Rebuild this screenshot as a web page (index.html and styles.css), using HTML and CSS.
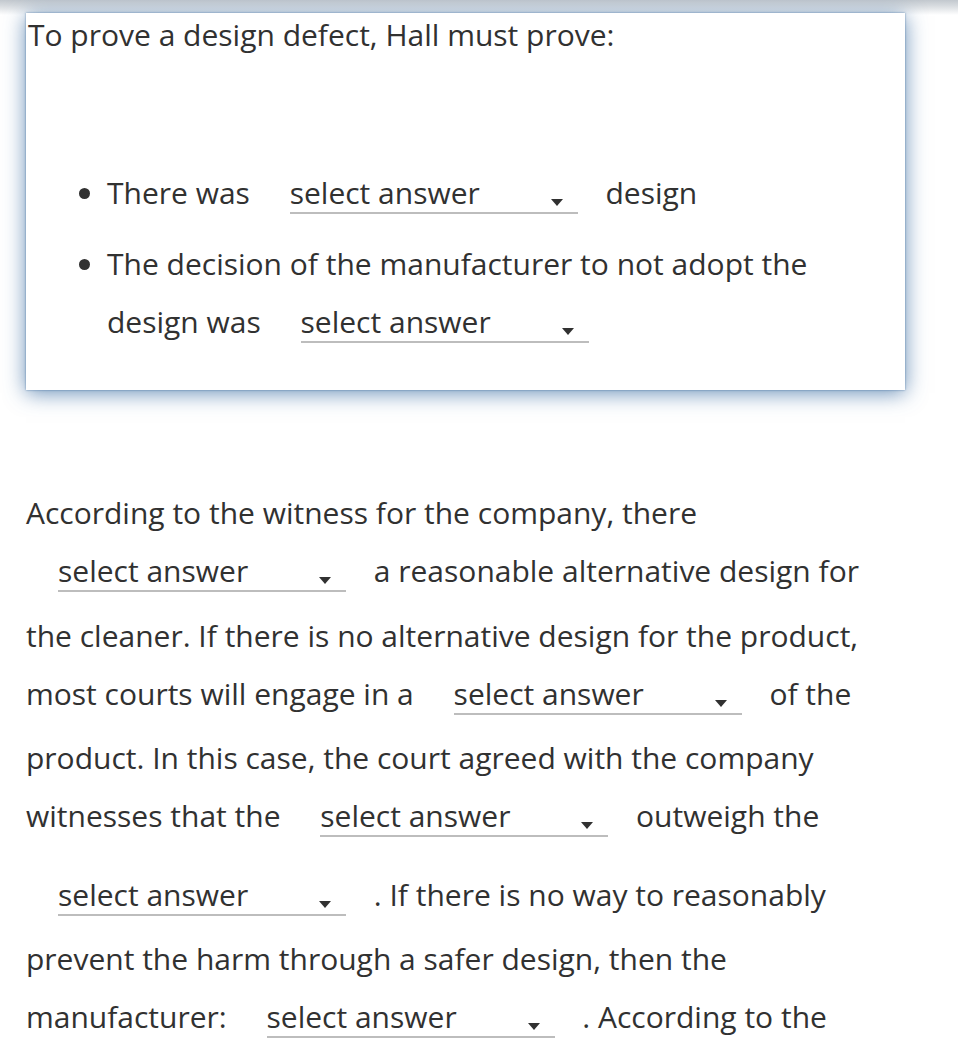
FILE: index.html
```html
<!DOCTYPE html>
<html lang="en">
<head>
<meta charset="utf-8">
<title>Design defect</title>
<link rel="stylesheet" href="styles.css">
</head>
<body>
<div class="page">
  <section class="card">
    <p class="lead">To prove a design defect, Hall must prove:</p>
    <ul class="conditions">
      <li>There was <span class="select">select answer</span> design</li>
      <li>The decision of the manufacturer to not adopt the design was <span class="select">select answer</span></li>
    </ul>
  </section>
  <p class="passage">According to the witness for the company, there <span class="select">select answer</span> a reasonable alternative design for the cleaner. If there is no alternative design for the product, most courts will engage in a <span class="select">select answer</span> of the product. In this case, the court agreed with the company witnesses that the <span class="select">select answer</span> outweigh the <span class="select">select answer</span> . If there is no way to reasonably prevent the harm through a safer design, then the manufacturer: <span class="select">select answer</span> . According to the</p>
</div>
</body>
</html>
```
FILE: styles.css
```css
html, body {
  margin: 0;
  padding: 0;
  background: #fff;
}

body {
  font-family: "Open Sans", "Noto Sans", sans-serif;
  font-size: 30px;
  line-height: 44px;
  color: #313131;
}

.page {
  padding: 13px 53px 0 26px;
  background: linear-gradient(to bottom, #c2c8ce 0, #d8dce0 6px, #ffffff 15px) no-repeat;
  background-size: 100% 15px;
}

.card {
  background: #fff;
  padding: 0 0 26px 2px;
  box-shadow: 0 0 2px rgba(50, 100, 150, 0.7), 0 3px 20px rgba(55, 105, 160, 0.75);
}

.lead {
  margin: 0;
}

.conditions {
  margin: 100px 0 0;
  padding: 0 0 0 79px;
  list-style: disc;
}

.conditions li + li {
  margin-top: 6px;
}

.passage {
  margin: 101px 0 0;
}

.select {
  position: relative;
  display: inline-block;
  box-sizing: border-box;
  width: 288px;
  line-height: 38px;
  margin: 17px 20px 21.5px 32px;
  border-bottom: 2px solid #bdbdbd;
  color: #313131;
  vertical-align: baseline;
}

.select::after {
  content: "";
  position: absolute;
  right: 15px;
  bottom: 6px;
  width: 0;
  height: 0;
  border-left: 6px solid transparent;
  border-right: 6px solid transparent;
  border-top: 7px solid #313131;
}
```
